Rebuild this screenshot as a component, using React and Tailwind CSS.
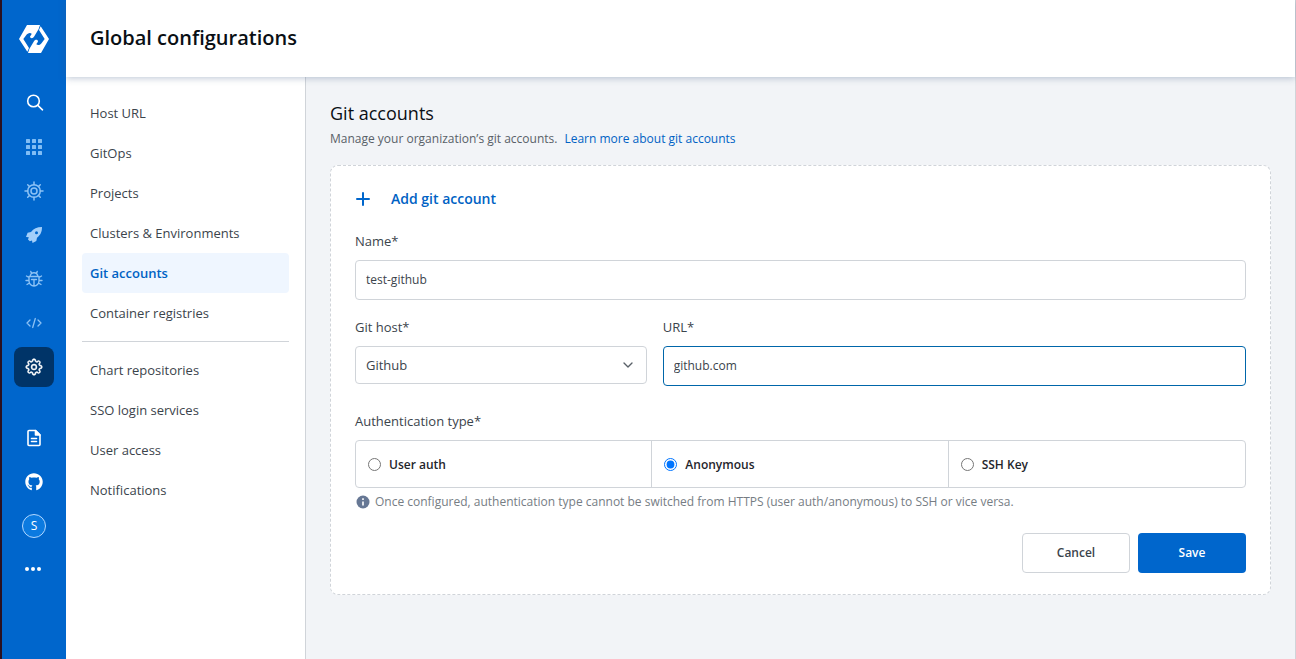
import { GoGear } from "react-icons/go";
import { FaGithub } from "react-icons/fa";
import { FiChevronDown } from "react-icons/fi";

const Logo = () => (
  <svg width="30" height="28" viewBox="0 0 90 84" fill="#fff" aria-hidden="true">
    <path d="M24 0H63L59 12L46 34C42 41 35 41 33 36C33 32 37 30 38 26C33 21 25 25 22 30L13 42L30 69L25 80L0 42Z" />
    <path d="M66 84H27L31 72L44 50C48 43 55 43 57 48C57 52 53 54 52 58C57 63 65 59 68 54L77 42L60 15L65 4L90 42Z" />
  </svg>
);

const SearchIcon = () => (
  <svg width="20" height="20" viewBox="0 0 20 20" fill="none" stroke="#fff" strokeWidth="1.6" strokeLinecap="round" aria-hidden="true">
    <circle cx="9.5" cy="8" r="5.8" />
    <path d="M13.8 12.300L18.500 16.800" />
  </svg>
);

const PlusIcon = () => (
  <svg width="16" height="16" viewBox="0 0 16 16" fill="none" stroke="#0066cc" strokeWidth="2" strokeLinecap="round" aria-hidden="true">
    <path d="M8 2v12M2 8h12" />
  </svg>
);

const GridIcon = () => (
  <svg width="18" height="18" viewBox="0 0 18 18" fill="#80bdf5" aria-hidden="true">
    {[1, 7, 13].map((y) => [1, 7, 13].map((x) => <rect key={`${x}-${y}`} x={x} y={y} width="4" height="4" rx="0.5" />))}
  </svg>
);

const HelmIcon = () => (
  <svg width="20" height="20" viewBox="0 0 20 20" fill="none" stroke="#8cc2f5" strokeWidth="1.5" strokeLinecap="round" aria-hidden="true">
    <circle cx="10" cy="10" r="6.3" />
    <circle cx="10" cy="10" r="3" />
    <path d="M10 3.7V1M10 19v-2.7M3.7 10H1M19 10h-2.7M5.5 5.5L3.7 3.7M16.3 16.3l-1.8-1.8M5.5 14.5l-1.8 1.8M16.3 3.7l-1.8 1.8" />
  </svg>
);

const RocketIcon = () => (
  <svg width="20" height="20" viewBox="0 0 20 20" aria-hidden="true">
    <path fill="#a3cffa" fillRule="evenodd" d="M18 2C13 2 9.500 3.500 7 7L3.600 7.800L2 12L4.800 12.300L4 14.500L5.800 16.200L8 15.500L8.500 18L12.300 16L13 12.700C16.500 10 18 7 18 2ZM12.500 6.200a1.500 1.500 0 1 1 0 3a1.500 1.500 0 1 1 0-3Z" />
  </svg>
);

const BugIcon = () => (
  <svg width="20" height="20" viewBox="0 0 20 20" fill="none" stroke="#8cc2f5" strokeWidth="1.4" strokeLinecap="round" strokeLinejoin="round" aria-hidden="true">
    <path d="M5 7.500h10v4.500a5 5 0 0 1-10 0ZM6.200 7.500a3.800 3.800 0 0 1 7.600 0M10 10.500V17M7.500 10.500h5M7.500 4.500L6.800 2.500M12.500 4.500L13.200 2.500M5 8.500L2.500 7M15 8.500L17.500 7M5 11.500H2M15 11.500h3M5.500 14L3 15.500M14.500 14L17 15.500" />
  </svg>
);

const CodeIcon = () => (
  <svg width="18" height="18" viewBox="0 0 18 18" fill="none" stroke="#8cc2f5" strokeWidth="1.3" strokeLinecap="round" strokeLinejoin="round" aria-hidden="true">
    <path d="M5 6L2 9l3 3M13 6l3 3-3 3M10.300 4.500l-2.600 9" />
  </svg>
);

const DocIcon = () => (
  <svg width="20" height="20" viewBox="0 0 20 20" fill="none" stroke="#fff" strokeWidth="1.6" strokeLinejoin="round" strokeLinecap="round" aria-hidden="true">
    <path d="M5 2.500h6.500L16 7v9.500a1 1 0 0 1-1 1H5a1 1 0 0 1-1-1v-13a1 1 0 0 1 1-1Z" />
    <path d="M11.500 2.500V7H16Z" fill="#fff" />
    <path d="M7.500 10.500h5M7.500 13.500h5" />
  </svg>
);

const DotsIcon = () => (
  <svg width="18" height="8" viewBox="0 0 18 8" fill="#fff" aria-hidden="true">
    <circle cx="2" cy="3" r="2" />
    <circle cx="8" cy="3" r="2" />
    <circle cx="14" cy="3" r="2" />
  </svg>
);

const InfoIcon = () => (
  <svg width="16" height="16" viewBox="0 0 16 16" aria-hidden="true">
    <circle cx="8" cy="8" r="6.500" fill="#667794" />
    <path d="M8 4.300v1.700M8 7.400v4" stroke="#fff" strokeWidth="1.6" />
  </svg>
);

const primary = [
  { label: "Search", icon: <SearchIcon /> },
  { label: "Applications", icon: <GridIcon /> },
  { label: "Chart store", icon: <HelmIcon /> },
  { label: "Deployments", icon: <RocketIcon /> },
  { label: "Security", icon: <BugIcon /> },
  { label: "Bulk edit", icon: <CodeIcon /> },
  { label: "Global configurations", icon: <GoGear size={18} color="#fff" stroke="#fff" strokeWidth={0.6} />, active: true },
];

const secondary = [
  { label: "Documentation", icon: <DocIcon /> },
  { label: "GitHub", icon: <FaGithub size={18} color="#fff" /> },
  {
    label: "Profile",
    icon: (
      <span className="flex size-6 items-center justify-center rounded-full border border-[#b3d8ff] bg-[#0b7ae0] text-xs text-white">S</span>
    ),
  },
  { label: "More", icon: <DotsIcon /> },
];

function RailButton({ label, icon, active }) {
  return (
    <button
      type="button"
      aria-label={label}
      className={`flex size-10 items-center justify-center rounded-lg ${active ? "bg-[#003468]" : ""}`}
    >
      {icon}
    </button>
  );
}

function Rail() {
  return (
    <aside className="flex w-[66px] shrink-0 flex-col items-center border-l-2 border-[#2a1020] bg-[#0066cc]">
      <a href="#home" aria-label="Home" className="flex h-[83px] items-center pb-1.5">
        <Logo />
      </a>
      <div className="flex flex-col gap-1">
        {primary.map((i) => <RailButton key={i.label} {...i} />)}
      </div>
      <div className="mt-[31px] flex flex-col gap-1">
        {secondary.map((i) => <RailButton key={i.label} {...i} />)}
      </div>
    </aside>
  );
}

const groups = [
  ["Host URL", "GitOps", "Projects", "Clusters & Environments", "Git accounts", "Container registries"],
  ["Chart repositories", "SSO login services", "User access", "Notifications"],
];

function SettingsNav() {
  return (
    <nav className="w-60 shrink-0 border-r border-[#d0d4d9] bg-white p-4">
      {groups.map((items, n) => (
        <ul key={n} className={n > 0 ? "mt-2 border-t border-[#d0d4d9] pt-2" : ""}>
          {items.map((item) => (
            <li key={item}>
              <a
                href="#settings"
                className={`flex h-10 items-center rounded px-2 text-[13px] leading-5 ${
                  item === "Git accounts" ? "bg-[#eff6ff] font-semibold text-[#0062c4]" : "text-[#3b444c]"
                }`}
              >
                {item}
              </a>
            </li>
          ))}
        </ul>
      ))}
    </nav>
  );
}

const authTypes = ["User auth", "Anonymous", "SSH Key"];

function GitAccountForm() {
  return (
    <form className="mt-4 rounded-lg border border-dashed border-[#d0d4d9] bg-white px-6 pt-6 pb-[21px] text-[13px] leading-[18px] text-[#3b444c]">
      <button type="button" className="flex items-center gap-5 text-sm leading-[18px] font-semibold text-[#0062c4]">
        <PlusIcon />
        Add git account
      </button>

      <div className="mt-6 flex flex-col gap-2.5">
        <label htmlFor="name">Name*</label>
        <input id="name" defaultValue="test-github" className="h-10 rounded border border-[#d0d4d9] px-2.5 pb-0.5 text-xs outline-none" />
      </div>

      <div className="mt-[18px] flex items-start gap-4">
        <div className="flex flex-1 flex-col gap-2.5">
          <label htmlFor="host">Git host*</label>
          <div className="relative">
            <select id="host" className="h-[38px] w-full appearance-none rounded border border-[#d0d4d9] bg-white px-2.5 outline-none">
              <option>Github</option>
            </select>
            <FiChevronDown size={16} color="#596168" className="pointer-events-none absolute top-[11px] right-[11px]" />
          </div>
        </div>
        <div className="flex flex-2 flex-col gap-2.5">
          <label htmlFor="url">URL*</label>
          <input id="url" defaultValue="github.com" className="h-10 rounded border border-[#0066aa] px-2.5 pb-0.5 text-xs outline-none" />
        </div>
      </div>

      <fieldset className="mt-[26px]">
        <legend className="mb-2.5">Authentication type*</legend>
        <div className="grid h-12 grid-cols-3 divide-x divide-[#d0d4d9] rounded border border-[#d0d4d9]">
          {authTypes.map((t) => (
            <label key={t} className="flex items-center gap-2 px-3 pt-px text-xs leading-5 font-semibold text-[#1f262c]">
              <input type="radio" name="auth" defaultChecked={t === "Anonymous"} className="size-[13px]" />
              {t}
            </label>
          ))}
        </div>
      </fieldset>

      <p className="mt-1 flex items-center gap-1 text-xs leading-5 text-[#767d84]">
        <InfoIcon />
        Once configured, authentication type cannot be switched from HTTPS (user auth/anonymous) to SSH or vice versa.
      </p>

      <div className="mt-[21px] flex justify-end gap-2 text-xs font-semibold">
        <button type="button" className="h-10 w-27 rounded border border-[#d0d4d9] bg-white">Cancel</button>
        <button type="submit" className="h-10 w-27 rounded bg-[#0066cc] text-white">Save</button>
      </div>
    </form>
  );
}

export default function App() {
  return (
    <div className="flex min-h-screen bg-white font-['Open_Sans','Noto_Sans',sans-serif]">
      <Rail />
      <div className="flex min-w-0 flex-1 flex-col border-r border-[#d0d4d9]">
        <header className="relative z-10 flex h-[77px] items-center bg-white px-6 pb-0.5 shadow-[0_1px_7px_rgba(60,90,130,0.35)]">
          <h1 className="text-xl font-semibold text-[#0a0f14]">Global configurations</h1>
        </header>
        <div className="flex flex-1">
          <SettingsNav />
          <main className="min-w-0 flex-1 bg-[#f2f4f7] px-6 pt-6">
            <h2 className="text-lg leading-6 text-[#0a0f14]">Git accounts</h2>
            <p className="mt-1 text-xs leading-5 text-[#596168]">
              Manage your organization’s git accounts.
              <a href="#docs" className="ml-[7px] text-[#0062c4]">Learn more about git accounts</a>
            </p>
            <GitAccountForm />
          </main>
        </div>
      </div>
    </div>
  );
}
